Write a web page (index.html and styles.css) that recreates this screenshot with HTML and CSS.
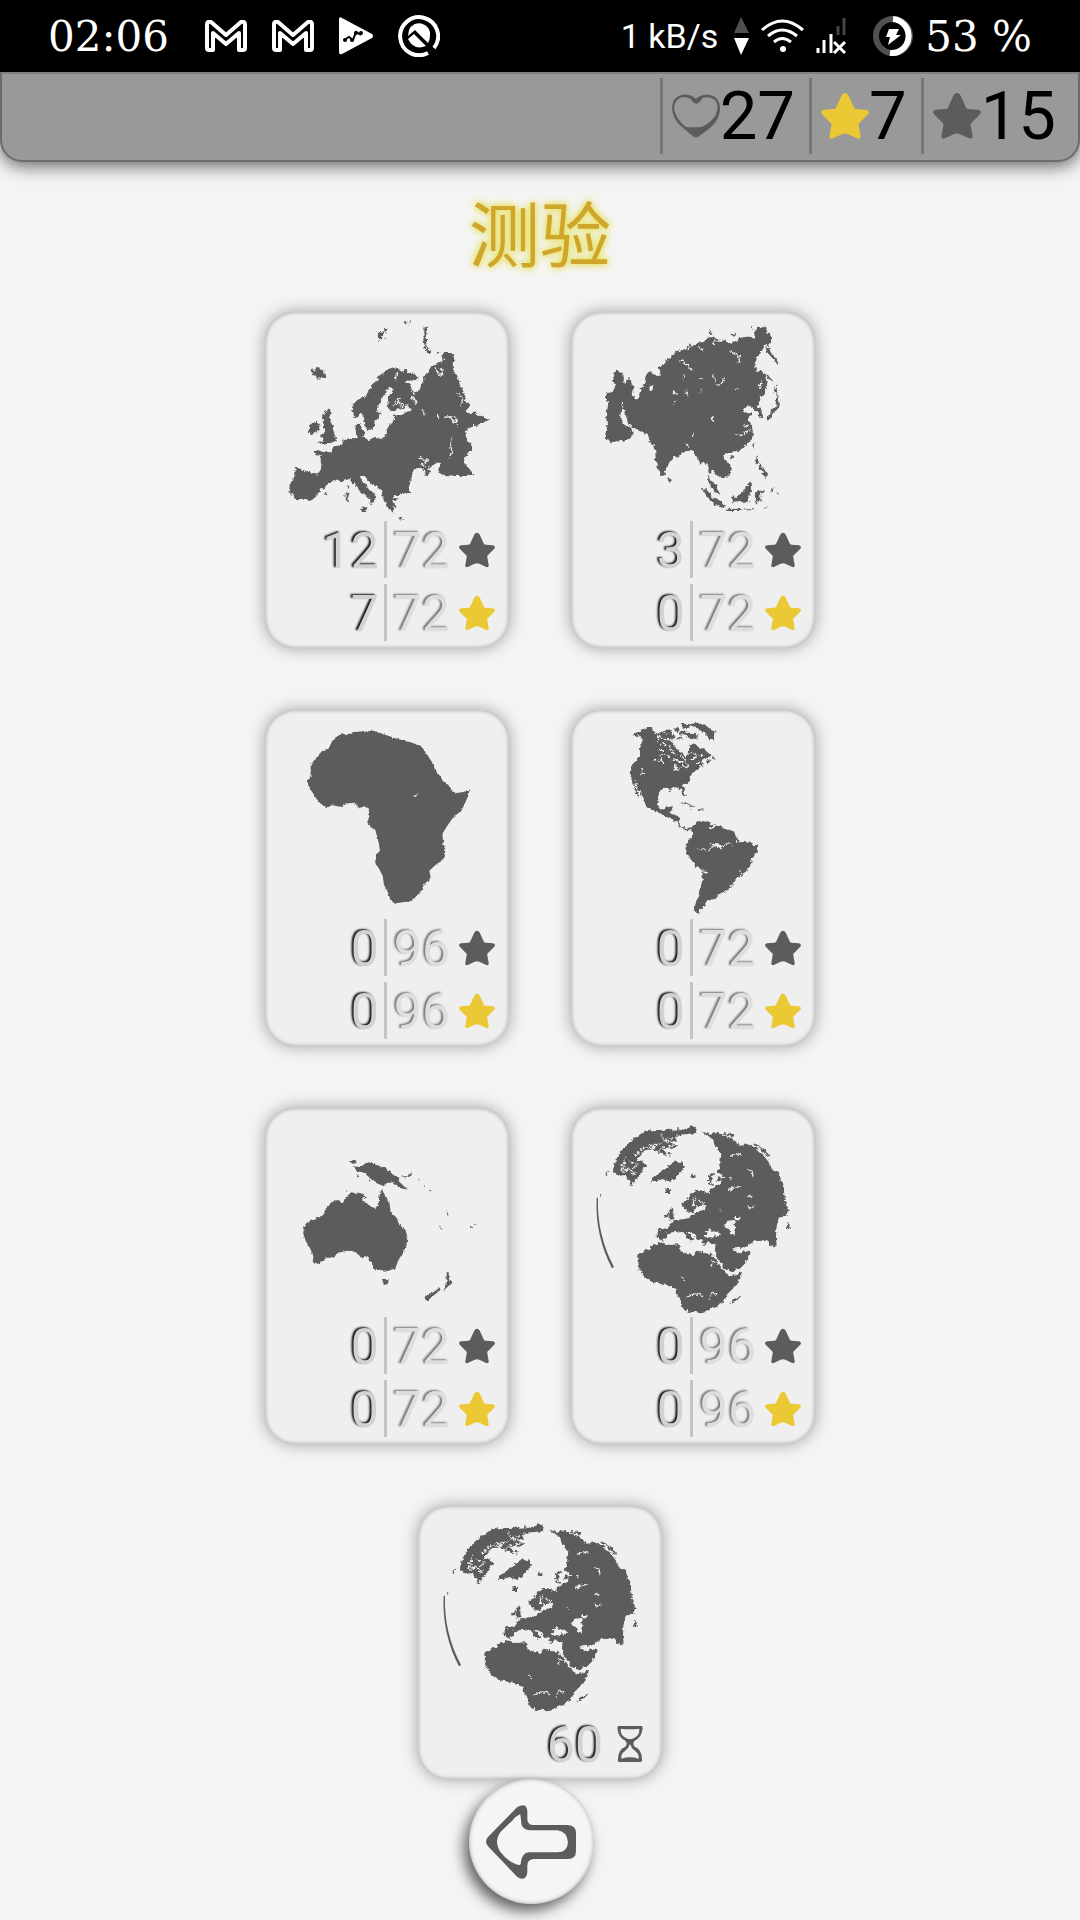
FILE: index.html
```html
<!DOCTYPE html>
<html lang="zh">
<head>
    <meta charset="UTF-8">
    <meta name="viewport" content="width=device-width, initial-scale=1.0">
    <title>测验</title>
    <link rel="stylesheet" href="styles.css">
</head>
<body>
    <!-- Shared shapes -->
    <svg class="defs" aria-hidden="true">
        <filter id="coast" x="-5%" y="-5%" width="110%" height="110%">
            <feTurbulence type="fractalNoise" baseFrequency="0.08" numOctaves="3" seed="4" result="noise"/>
            <feDisplacementMap in="SourceGraphic" in2="noise" scale="17" xChannelSelector="R" yChannelSelector="G"/>
        </filter>
        <filter id="coast-soft" x="-5%" y="-5%" width="110%" height="110%">
            <feTurbulence type="fractalNoise" baseFrequency="0.1" numOctaves="2" seed="7" result="noise"/>
            <feDisplacementMap in="SourceGraphic" in2="noise" scale="9" xChannelSelector="R" yChannelSelector="G"/>
        </filter>
        <symbol id="star" viewBox="0 0 108 104">
            <path d="M54 0c4 0 7 3 9 8l11 24c1 3 3 4 6 4l21 2c7 1 9 6 4 11L88 66c-3 2-4 5-3 8l4 23c1 6-4 8-9 5L61 93c-5-2-9-2-14 0l-19 9c-5 3-10 1-9-5l4-23c1-3 0-6-3-8L3 49c-5-5-3-10 4-11l21-2c3 0 5-1 6-4L45 8c2-5 5-8 9-8z"/>
        </symbol>
        <symbol id="mail" viewBox="0 0 42 32">
            <path fill="none" stroke="#fff" stroke-width="4" stroke-linejoin="round" d="M2 28V4q0-3 4-2l15 13L36 2q4-1 4 2v24q0 2-2 2h-4V13L21 24 8 13v17H4q-2 0-2-2z"/>
        </symbol>
        <symbol id="globe" viewBox="33 27 732 627">
            <g class="land">
                <path d="M158 220L164 190 180 160 210 128 246 102 272 94 330 92 378 90 396 82 410 90 408 104 384 108 350 110 352 124 330 130 352 140 340 150 310 142 322 160 340 166 318 172 296 160 280 152 262 152 246 162 228 184 250 188 262 200 246 214 242 230 226 246 214 262 206 240 190 228 176 232z"/>
                <path d="M272 250L280 236 298 222 316 206 334 192 352 186 366 192 372 206 360 222 346 238 326 246 306 240 288 246z"/>
                <path d="M316 270h14v12h-12z"/>
                <path d="M426 98L450 104 474 98 496 110 522 124 542 140 566 134 590 150 610 168 626 190 634 210 656 222 666 250 672 280 676 312 686 330 678 352 656 356 650 380 648 410 650 448 638 442 622 424 606 428 590 422 566 438 546 446 520 448 532 462 556 456 572 460 564 482 544 502 514 522 498 512 480 490 466 468 466 432 452 432 436 438 424 434 430 420 424 418 412 420 400 406 384 398 372 402 356 398 336 400 318 404 318 420 304 424 290 416 290 400 300 386 324 390 330 372 344 364 372 360 392 352 412 340 434 328 444 316 424 320 410 322 400 340 390 344 380 330 366 326 368 310 380 304 392 286 412 272 430 276 446 286 448 272 462 266 482 250 488 230 474 220 480 196 484 166 472 146 456 122z"/>
                <path d="M236 466L262 452 280 440 300 430 330 438 356 436 362 456 384 466 400 468 410 458 430 462 452 464 464 478 484 508 500 524 514 532 546 518 540 540 522 564 500 588 494 608 470 622 450 634 420 640 384 638 364 624 362 600 348 584 346 566 326 562 306 554 280 550 256 536 238 514 232 492z"/>
                <path d="M328 334l8-10 4 12 0 16 4 8-14 2-2-14zM314 346l10-4 2 10-10 4zM366 398l8-2 26 24-4 6-16-12zM508 616l14-16 20-8-14 16z"/>
                <path d="M600 140l18 14 10 20-8-4-14-18zM576 132l16 6 10 10-14-4zM490 102l34 4-4 8-24-6zM682 366l8 14-2 14-8-10zM136 224l12-10-4 14zM444 232l16-14 10 8-14 6-6 18 14 10-12-2-8-14zM392 230l10-6 2 6-6 10zM470 240l10-8 6 8-8 8z"/>
            </g>
            <path class="land smooth" d="M110 296q-6 112 46 212l6-4Q110 406 114 296zM120 286l4 0-2 10z"/>
            <g class="water">
                <path d="M504 366l18-4 4 26-2 22-12-4-6-16-16-10zM432 408l18-22 10 12 18 0 2 12-22 4-20 4zM526 354h12v10h-12z"/>
                <path class="line" d="M504 278q18-18 42-14M560 212q22 2 18 24M562 320q10 14 20 4M564 290l12 6M380 598q22-22 46-8M444 602l14-22 12 10M508 172l30-8 6 12M366 534l8 12M474 230l18 8M454 500l8-14M508 234l10 6M480 328l4 14M404 296l-6 24 10-4M414 308l18 4"/>
                <path class="specks" d="M196 176l-14 40 32-6 12 14M224 168l28-20 40-14M290 136l-20 34M300 108l20 20 34-16M270 150l60-34M296 156l56-22M310 170l48-10M206 188l24 8-14 22M190 206l30 18"/>
            </g>
        </symbol>
    </svg>

    <div class="status-bar">
        <span class="clock">02:06</span>
        <div class="notifications">
            <svg width="42" height="32"><use href="#mail"/></svg>
            <svg width="42" height="32"><use href="#mail"/></svg>
            <svg width="34" height="38" viewBox="0 0 34 38"><path fill="#fff" d="M0 2q0-3 3-1l30 16q2 2 0 4L3 37q-3 1-3-2z"/><path d="M5 23l5-3 4 3 3-8 5 3" fill="none" stroke="#000" stroke-width="2"/><circle cx="6" cy="23" r="2"/><circle cx="13" cy="23" r="2"/><circle cx="17" cy="16" r="2"/><circle cx="22" cy="16" r="2"/></svg>
            <svg width="42" height="42" viewBox="0 0 42 42"><path fill="none" stroke="#fff" stroke-width="4" d="M30 38a19 19 0 1 1 6-5"/><path fill="#fff" d="M11 15a11 11 0 0 1 21 6q0 4-2 7L17 15l-7 6zM10 24l6-5 12 12q-12 5-18-7z"/></svg>
        </div>
        <span class="net-speed">1 kB/s</span>
        <div class="indicators">
            <svg width="15" height="38" viewBox="0 0 15 38"><path fill="#505050" d="M7 0l8 16H0z"/><path fill="#fff" d="M0 21h15L7 38z"/></svg>
            <svg width="43" height="34" viewBox="0 0 43 34"><g fill="none" stroke="#fff" stroke-width="3"><path d="M1 11Q21-7 42 11"/><path d="M7 17Q21 5 36 17"/><path d="M13 23Q21 16 30 23"/></g><circle cx="22" cy="30" r="3" fill="#fff"/></svg>
            <svg width="31" height="36" viewBox="0 0 31 36"><path stroke="#fff" stroke-width="3" d="M2 35v-5M8 35V22M15 35V16M18 24l11 11M29 24L18 35"/><path stroke="#444" stroke-width="3" d="M22 17V8M28 17V0"/></svg>
        </div>
        <svg class="battery" width="40" height="40" viewBox="0 0 40 40"><circle cx="20" cy="20" r="17" fill="none" stroke="#505050" stroke-width="6"/><path fill="none" stroke="#fff" stroke-width="6" d="M20 3a17 17 0 1 1-3 34"/><path fill="#fff" d="M16 13h10l-3 6h5L15 29l2-8h-4z"/></svg>
        <span class="clock">53 %</span>
    </div>

    <header class="top-bar">
        <div class="counter">
            <svg width="48" height="44" viewBox="0 0 140 128"><path fill="#5c5c5c" fill-rule="evenodd" d="M70 14Q84 0 108 2q30 4 32 38 1 34-30 60L78 124q-8 6-16 0L24 92Q0 70 0 38 2 6 34 1 56 0 70 14zM70 28Q60 26 54 14 30 2 14 18 0 36 12 62q10 20 28 34 20 2 46 0 22-8 40-32 14-30 0-46Q108 4 88 12 80 28 70 28z"/></svg>
            <span>27</span>
        </div>
        <div class="counter gold">
            <svg width="48" height="46"><use href="#star"/></svg>
            <span>7</span>
        </div>
        <div class="counter">
            <svg width="48" height="46"><use href="#star"/></svg>
            <span>15</span>
        </div>
    </header>

    <main>
        <h1>测验</h1>
        <div class="quiz-grid">
            <!-- Europe -->
            <button class="card" type="button">
                <svg class="map" viewBox="45 38 732 627">
                    <g class="land">
                        <path d="M137 504L152 510 178 518 202 526 213 510 214 492 208 478 214 468 196 464 194 458 210 456 222 462 230 456 244 456 250 442 270 438 278 424 290 422 300 418 316 420 322 412 318 404 316 390 318 376 334 368 330 386 342 392 344 404 336 412 350 416 358 422 372 414 392 418 408 410 412 396 414 378 426 372 436 360 428 350 446 346 464 340 480 334 488 326 470 322 456 330 440 330 424 334 414 322 412 304 420 290 430 276 430 266 418 262 408 272 404 288 392 304 386 320 384 336 392 344 384 354 374 366 372 382 360 392 350 390 346 376 342 356 334 340 328 350 316 356 308 346 306 330 308 316 322 302 344 294 354 280 364 262 378 244 390 230 404 220 416 208 430 204 444 206 450 214 466 212 482 220 498 226 506 236 500 246 486 244 472 240 466 248 480 256 480 266 492 276 504 278 514 270 510 256 522 244 524 232 538 212 544 200 556 196 572 190 580 180 574 170 584 158 600 158 610 166 613 182 608 200 612 220 624 236 630 256 640 276 644 300 658 316 646 338 662 344 676 336 684 348 698 352 716 362 706 368 690 374 670 378 656 390 646 402 650 420 664 436 666 452 652 462 644 474 642 490 658 508 674 527 650 530 610 530 580 526 562 520 570 506 570 488 556 492 540 500 530 510 544 516 534 526 526 526 522 512 510 506 500 506 490 514 484 534 478 560 484 578 470 582 450 586 430 588 428 594 444 598 436 604 426 606 434 616 442 620 436 626 428 622 430 640 418 630 414 618 404 604 398 594 394 574 378 560 362 554 352 540 344 530 330 530 334 542 346 556 358 572 372 582 382 600 372 598 366 610 358 614 362 602 350 590 336 578 322 566 312 552 304 540 290 538 270 546 252 542 242 546 236 556 220 566 206 576 198 590 190 602 176 604 160 598 140 600 130 590 116 578 120 556 126 540 136 524z"/>
                        <path d="M182 208l14 4 6-6 20 4 4 24-22 4-18-12zM172 400l8-14 2-14 18-8 10 8-4 24-18 8zM222 336l22-6 0 14-6 10 8 10 2 20 10 30-2 14-24 4-30 2 16-12-8-12 14-12 0-16-6-16z"/>
                        <path d="M326 626l26-2-4 14-12 0zM286 580l10 0 0 24-8 0zM292 562l6-2-2 14zM440 657l24 2-12 5zM524 84l10 2-6 20 0 22 4 20 18 12-18 2-8-14-4-30 0-14zM552 162l24-2-10 4z"/>
                        <path d="M382 96l12 4 4-8 6 10-8 8-8 16-4-10zM400 90l14-2-6 14zM404 110l6 6-4 6zM226 582h7v6h-7zM462 66h4v6h-4zM478 64h3v8h-3z"/>
                    </g>
                    <g class="water">
                        <path class="line" d="M554 200l12 28 12-2-4-22M484 290l16 24M470 316l14 14M582 354l20-2 10 16 10-10M608 418l-6 18 4 20-8 18M506 474l28 10-20 12 14 8M626 282l12 16-6 20M516 330l8 18M562 346l4 10M440 222l-4 18"/>
                        <path class="specks" d="M428 320l18-18 20 20M436 308l24 14M446 296l8 24M614 350l8 32M484 270l10 30"/>
                    </g>
                </svg>
                <span class="score"><span class="done">12</span><span class="total">72</span><svg class="star"><use href="#star"/></svg></span>
                <span class="score"><span class="done">7</span><span class="total">72</span><svg class="star gold"><use href="#star"/></svg></span>
            </button>

            <!-- Asia -->
            <button class="card" type="button">
                <svg class="map" viewBox="33 38 732 627">
                    <g class="land">
                        <path d="M598 84L612 80 620 96 632 106 634 136 622 140 612 134 610 150 598 166 590 176 584 196 590 214 604 214 614 224 620 248 618 272 612 288 602 294 600 306 592 320 600 326 608 340 606 354 596 350 590 336 576 326 564 318 556 326 548 338 560 342 576 338 570 350 562 356 570 370 578 390 578 410 566 430 550 446 530 454 516 460 502 460 492 468 496 482 510 494 514 510 510 524 498 532 492 540 484 532 470 528 462 514 452 518 446 532 452 546 468 556 476 572 478 586 464 578 452 560 444 544 446 516 440 500 434 488 424 494 418 496 412 476 402 458 390 454 372 456 356 470 340 478 326 490 322 508 314 526 304 530 296 510 288 486 286 462 284 438 274 436 268 426 274 420 260 402 240 396 220 384 206 370 198 352 196 334 186 332 184 352 186 372 200 380 212 382 218 402 212 416 190 424 160 428 140 422 136 404 142 380 138 350 144 320 138 290 142 282 158 278 166 260 158 238 160 222 170 214 186 222 190 240 196 250 208 236 216 250 222 266 218 282 226 302 236 296 242 270 252 262 256 232 264 218 278 220 290 230 302 228 300 214 296 204 310 196 330 176 350 154 372 152 384 142 394 128 400 140 412 130 428 128 440 116 462 112 474 124 492 124 510 130 530 126 534 116 560 112 578 118 582 100 590 90z"/>
                        <path d="M616 142l12 8 14 20 16 24-4 2-24-24-10-16zM612 218l10 8 16 26-8-6zM640 264l14-2-2 16-8 0zM650 280l8 24-4 24-18 16-8 22-8-2 8-24 18-16zM580 428l6 4-4 14zM510 472l10-2-2 10-6 0zM322 532l10 6-2 12-8-6zM588 470l8 14 0 14-10-10zM596 494l14 6 4 14 10 8-2 14-16-8 6-10-12-10z"/>
                        <path d="M424 564l16 8 20 20 22 14 12 16-2 4-26-8-22-22zM496 628l28 0 22 2-4 5-40 0zM550 630h40v3h-40zM516 592l14 0 22-18 16-26 8 4-4 12 4 12-8 14-4 16-46 4zM584 584l12-10 18-2-14 12 2 16 4 8-10-6-4 10-8 0 4-14zM610 628l14-8-6 8zM634 566l6 4-2 10-4-6z"/>
                        <path d="M514 104l14-4-2 10-8 2zM448 90l6 8 4 8-8-6zM576 78l5 8-4 2zM600 576l14-2v4zM646 580l8 2-6 3z"/>
                    </g>
                    <g class="water">
                        <path d="M270 258h10l4 10-12 8-4-8zM453 354h8v8h-8zM366 228h6v6h-6zM340 306h6v6h-6z"/>
                        <path class="line" d="M358 182q20 4 38 34M466 258q28-2 24-24M460 228l8 18M512 154q8 12 30 18-2 18-12 22M334 284q12-10 22 4M380 152l14-10 6-16M598 268q8-12 8-22M418 236l10 6M378 268l4 20M424 268l-4 14M528 270h10M398 398v14M378 434l8 8"/>
                        <path class="specks" d="M528 408l26-6 16-12M552 372l16 12M416 140l14 18M466 122l-10 18M186 310l6 20"/>
                    </g>
                </svg>
                <span class="score"><span class="done">3</span><span class="total">72</span><svg class="star"><use href="#star"/></svg></span>
                <span class="score"><span class="done">0</span><span class="total">72</span><svg class="star gold"><use href="#star"/></svg></span>
            </button>

            <!-- Africa -->
            <button class="card" type="button">
                <svg class="map" viewBox="45 32 732 627">
                    <g class="land soft">
                        <path d="M274 102L290 106 310 98 370 94 400 104 440 118 480 128 514 140 530 164 554 200 560 218 572 232 578 244 602 266 606 272 614 282 640 278 658 270 656 286 644 314 634 334 610 354 590 382 577 404 580 434 586 450 584 474 574 486 560 494 538 514 542 534 536 544 522 554 516 572 500 590 480 606 464 608 436 612 422 606 416 584 402 556 398 530 388 510 376 492 378 466 390 454 386 430 380 404 370 388 352 370 358 352 356 326 340 322 328 326 310 310 296 312 270 322 246 318 228 326 204 306 192 286 176 262 172 244 182 230 182 196 206 166 220 152 236 148 246 126z"/>
                    </g>
                    <g class="water"><path d="M492 288l8-2 2 6-6 0zM502 282h5v4h-5z"/></g>
                </svg>
                <span class="score"><span class="done">0</span><span class="total">96</span><svg class="star"><use href="#star"/></svg></span>
                <span class="score"><span class="done">0</span><span class="total">96</span><svg class="star gold"><use href="#star"/></svg></span>
            </button>

            <!-- Americas -->
            <button class="card" type="button">
                <svg class="map" viewBox="33 32 732 627">
                    <g class="land">
                        <path d="M219 112L224 102 240 96 256 86 276 82 284 94 290 104 306 96 318 106 334 100 344 112 336 128 346 140 356 150 376 172 386 162 388 140 400 132 414 142 432 150 446 162 456 170 440 176 424 186 432 194 414 208 408 216 396 224 392 238 382 252 370 262 374 280 378 292 370 290 362 268 340 266 330 272 316 268 302 272 292 290 292 314 300 330 316 330 322 320 340 318 334 334 326 342 346 348 358 350 356 372 366 382 382 386 394 384 404 374 418 366 440 370 464 376 484 384 504 392 524 400 530 420 548 428 574 430 592 440 590 456 578 474 570 500 558 520 530 536 520 552 500 574 478 584 462 600 440 606 430 622 414 640 402 640 404 620 412 600 420 570 428 540 428 516 410 504 396 484 376 460 378 436 392 416 398 402 392 390 374 390 360 384 352 370 336 358 318 352 298 342 278 334 258 322 252 300 240 280 230 254 224 244 236 292 230 290 220 254 212 230 214 206 226 184 240 168 240 140 246 124 236 106z"/>
                        <path d="M388 76L412 70 436 76 456 94 464 92 460 124 446 118 432 98 412 86 398 84z"/>
                        <path d="M310 92l20 0 4 10-16 2zM340 84l16 2-2 12-12-2zM362 74l22 0 10 8-24 6zM360 96l20-4 10 12 20-4 4 12-22 8-14-10-16-2zM350 118l12-6 10 8-14 4zM396 112l18 4-2 6z"/>
                        <path d="M364 308l18 4 22 10-8 2-20-10zM408 326l26 2-16 5zM390 330l10 2-8 2zM456 174l14 6-12 2zM440 184l10-6 4 8-10 6z"/>
                    </g>
                    <g class="water">
                        <path d="M342 136l22-16 22 8-2 22 2 12-10 8-10-16-16-4z"/>
                        <path class="line" d="M338 182l22 2 14 22 12-8M348 196l-2 16 16-6M390 180l20-8M404 196l14-8M450 432l20 2 12 12M450 448q18-18 36-4M426 506l14 14M446 386l24-6M348 180l20 12"/>
                        <path class="specks" d="M286 100l12 14-8 14M302 116l36 8M300 132l30 6-4 14M296 150l34 24M332 150l16 20M284 180l24 8M300 168l8 26M414 450h34M488 440l16-8 14 4M528 428l24-2M538 514l8 10M308 88l50 14M356 88l50 16M360 168l20 18M246 208v22M392 160l40 12"/>
                    </g>
                </svg>
                <span class="score"><span class="done">0</span><span class="total">72</span><svg class="star"><use href="#star"/></svg></span>
                <span class="score"><span class="done">0</span><span class="total">72</span><svg class="star gold"><use href="#star"/></svg></span>
            </button>

            <!-- Oceania -->
            <button class="card" type="button">
                <svg class="map" viewBox="45 27 732 627">
                    <g class="land soft">
                        <path d="M160 382L172 370 196 360 220 348 226 330 238 318 254 304 268 304 276 316 286 296 304 280 324 284 342 284 336 304 350 314 378 330 386 308 390 282 396 270 404 290 418 308 422 340 440 356 448 378 466 392 472 412 470 438 458 462 446 482 436 508 420 514 404 518 390 512 372 514 364 490 352 478 346 470 336 480 322 462 300 454 270 460 250 474 228 478 206 494 188 490 190 472 180 448 166 424 160 404z"/>
                        <path d="M296 186l20-4 4 10-12 2zM308 202l20 2 12-6 16-8 30 10 26 10 18 18 18 8-2 10 16 16 12 10-26-6-16-16-22 2-8 10-24-10-18-14-16-16-24-6zM452 232l20 0 14-12-2 10-14 6zM396 540l20 0-2 14-12 4zM522 598l12-12 16-6 18-14 4 6-22 18-18 16zM580 576l10-20 0-36 6 0 2 26 10 6-14 10z"/>
                        <path d="M504 238l6 6-4 0zM566 378l12 14-6-2zM660 380h6v6h-6zM674 376h5v3h-5zM590 336l6 12-4 2zM522 258l4 4-4 2zM320 226l6 2-4 8zM540 272l4 2-2 4zM356 240l6 6-8 2zM288 274h5v4h-5zM342 288l6 8-6 2z"/>
                    </g>
                </svg>
                <span class="score"><span class="done">0</span><span class="total">72</span><svg class="star"><use href="#star"/></svg></span>
                <span class="score"><span class="done">0</span><span class="total">72</span><svg class="star gold"><use href="#star"/></svg></span>
            </button>

            <!-- World -->
            <button class="card" type="button">
                <svg class="map"><use href="#globe"/></svg>
                <span class="score"><span class="done">0</span><span class="total">96</span><svg class="star"><use href="#star"/></svg></span>
                <span class="score"><span class="done">0</span><span class="total">96</span><svg class="star gold"><use href="#star"/></svg></span>
            </button>

            <!-- World, timed -->
            <button class="card timed" type="button">
                <svg class="map"><use href="#globe"/></svg>
                <span class="score"><span class="seconds">60</span><svg class="star" viewBox="0 0 108 108"><path fill-rule="evenodd" d="M18 0h72l2 6q-2 28-24 38-8 8 0 18 22 8 22 38 2 8-6 8H22q-6 0-4-8 0-30 22-38 8-10 0-18Q18 34 16 6zM26 8q-2 16 12 26 16 12 32 0 14-10 12-26-28 4-56 0zM54 54q-4 14-16 22-12 8-10 22 26-8 52 0 2-14-10-22-12-8-16-22z"/></svg></span>
            </button>
        </div>
    </main>

    <button class="back" type="button" aria-label="Back">
        <svg width="90" height="74" viewBox="0 0 270 222"><path fill="#5c5c5c" fill-rule="evenodd" d="M94 6q28-14 30 12v26q2 16 18 16h104q24 2 24 24v54q0 24-24 24H142q-18 2-18 20v20q-4 30-30 14L8 126Q-8 110 8 94zM102 28Q88 34 80 46L44 80q-22 30 0 62 18 24 46 36 12 4 14 0 2-36 26-36h84q30 0 32-30-2-32-32-36h-84q-22-4-24-20-2-26-4-28z"/></svg>
    </button>
</body>
</html>
```
FILE: styles.css
```css
body {
    margin: 0;
    min-height: 100vh;
    background-color: #f4f4f4;
    color: #000;
    font-family: Roboto, "Noto Sans CJK SC", sans-serif;
}
svg {
    display: block;
    flex: none;
}
button {
    font: inherit;
    border: none;
    padding: 0;
    cursor: pointer;
}
.defs {
    position: absolute;
    width: 0;
    height: 0;
}

/* Phone status bar */
.status-bar {
    display: flex;
    align-items: center;
    height: 72px;
    padding: 0 48px;
    background-color: #000;
    color: #fff;
}
.clock {
    font-family: "DejaVu Serif", serif;
    font-size: 42px;
    white-space: nowrap;
}
.notifications {
    display: flex;
    align-items: center;
    gap: 25px;
    margin-left: 36px;
}
.net-speed {
    margin-left: auto;
    font-size: 34px;
}
.indicators {
    display: flex;
    align-items: center;
    gap: 12px;
    margin-left: 16px;
}
.battery {
    margin: 0 12px 0 26px;
}

/* Counters */
.top-bar {
    display: flex;
    justify-content: flex-end;
    box-sizing: border-box;
    height: 90px;
    padding: 4px 8px 6px;
    background-color: #999;
    border: 2px solid #6c6c6c;
    border-top-color: #808080;
    border-radius: 0 0 22px 22px;
    box-shadow: 0 4px 18px rgba(0, 0, 0, 0.6);
}
.counter {
    display: flex;
    align-items: center;
    padding: 0 14px 0 9px;
    border-left: 3px solid #777;
    font-size: 67px;
    line-height: 74px;
    fill: #5c5c5c;
}
.gold {
    fill: #ebc934;
}

h1 {
    margin: 0;
    color: #cfa52a;
    font-size: 71px;
    font-weight: normal;
    line-height: 150px;
    text-align: center;
    text-shadow: 0 0 6px #e6e05a, 0 0 8px #e6e05a;
}

/* Quiz cards */
.quiz-grid {
    display: grid;
    grid-template-columns: repeat(2, 244px);
    gap: 62px;
    justify-content: center;
}
.card {
    display: flex;
    flex-direction: column;
    gap: 6px;
    padding-bottom: 7px;
    background-color: #efefef;
    border-radius: 30px;
    box-shadow: inset 0 0 4px rgba(0, 0, 0, 0.35), 0 0 16px rgba(0, 0, 0, 0.35);
}
.timed {
    grid-column: 1 / -1;
    justify-self: center;
}
.map {
    width: 244px;
    height: 209px;
    margin-bottom: -6px;
}
.land {
    fill: #5c5c5c;
    filter: url(#coast);
}
.soft {
    filter: url(#coast-soft);
}
.smooth {
    filter: none;
}
.water {
    fill: #efefef;
    filter: url(#coast);
}
.line, .specks {
    fill: none;
    stroke: #efefef;
    stroke-width: 4px;
}
.specks {
    stroke-width: 5px;
    stroke-dasharray: 5 4 8 5;
}
.score {
    display: flex;
    align-items: center;
    justify-content: flex-end;
    align-self: stretch;
    height: 57px;
    padding-right: 14px;
    font-size: 50px;
    line-height: 53px;
}
.done, .seconds {
    padding-top: 4px;
    color: #d2d2d2;
    text-shadow: -2px -1px 2px #111;
}
.done {
    padding-right: 5px;
}
.total {
    padding: 4px 0 0 7px;
    border-left: 3px solid #c4c4c4;
    color: #dedede;
    text-shadow: -2px -1px 2px #777;
}
.star {
    width: 36px;
    height: 36px;
    margin-left: 9px;
    fill: #5c5c5c;
}
.star.gold {
    fill: #ebc934;
}

.back {
    display: flex;
    align-items: center;
    justify-content: center;
    position: relative;
    width: 125px;
    height: 125px;
    margin: 0 auto;
    left: -9px;
    background-color: #f5f5f5;
    border-radius: 50%;
    box-shadow: inset 0 0 4px rgba(0, 0, 0, 0.3), -5px 7px 14px rgba(0, 0, 0, 0.6);
}
```
